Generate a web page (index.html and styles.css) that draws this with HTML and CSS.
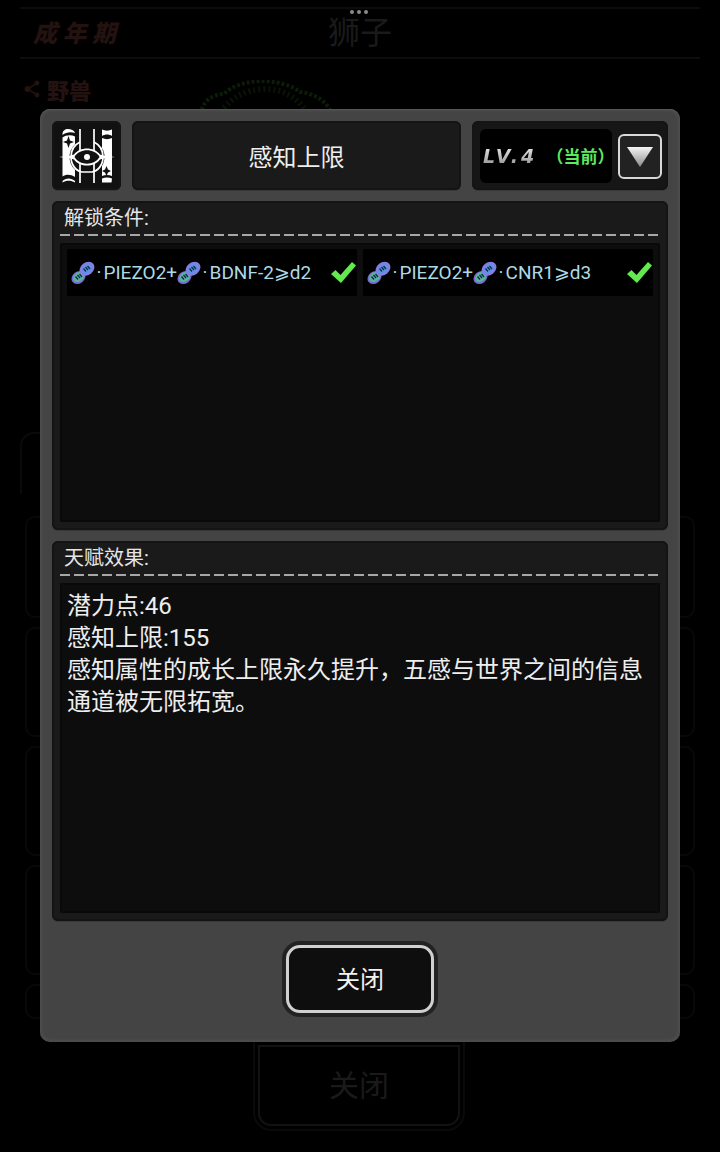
FILE: index.html
```html
<!DOCTYPE html>
<html lang="zh">
<head>
<meta charset="utf-8">
<title>感知上限</title>
<link rel="stylesheet" href="styles.css">
</head>
<body>
<svg class="defs" width="0" height="0" aria-hidden="true">
  <defs>
    <linearGradient id="tri-fill" x1="0" y1="0" x2="0" y2="1">
      <stop offset="0" stop-color="#f4f4f4"/>
      <stop offset="1" stop-color="#8a8a8a"/>
    </linearGradient>
    <symbol id="dna" viewBox="0 0 24 24">
      <ellipse cx="7.500" cy="16.500" rx="7.500" ry="6" transform="rotate(-38 7.500 16.500)" fill="#7a6ad6"/>
      <ellipse cx="7.800" cy="15.800" rx="6.300" ry="4.500" transform="rotate(-38 7.800 15.800)" fill="#58b39a"/>
      <ellipse cx="16" cy="7.800" rx="8" ry="6.300" transform="rotate(-38 16 7.800)" fill="#8f78ea"/>
      <ellipse cx="15.800" cy="8" rx="6.300" ry="4.500" transform="rotate(-38 15.800 8)" fill="#5f93e0"/>
      <g stroke="#14294d" stroke-width="1.300" fill="none">
        <path d="M12.500 7.500 15 10.500M14.500 6 17 9M16.500 5 19 8"/>
        <path d="M4.500 15.500 7 18.500M6.500 14 9 17M8.500 13 11 16"/>
      </g>
    </symbol>
    <symbol id="check" viewBox="0 0 25 21">
      <path d="M0 12 4.500 8 9.500 13 21 0 25 3.500 10 21Z" fill="#63ea4f"/>
    </symbol>
  </defs>
</svg>

<div class="page">
  <header class="top">
    <span class="dots"><i></i><i></i><i></i></span>
    <div class="top-row">
      <span class="stage">成年期</span>
      <span class="name">狮子</span>
    </div>
  </header>
  <div class="kind">
    <svg class="share" viewBox="0 0 18 18" aria-hidden="true"><path d="M13.500 3.500 4.500 9l9 5.500" fill="none" stroke="#24120e" stroke-width="1.500"/><circle cx="4.500" cy="9" r="3" fill="#24120e"/><circle cx="14" cy="3" r="2.400" fill="#24120e"/><circle cx="14" cy="15" r="2.400" fill="#24120e"/></svg>
    <span>野兽</span>
  </div>
  <svg class="portrait" viewBox="0 0 132 30" aria-hidden="true">
    <path d="M2 30C4 20 14 14 24 14 32 6 44 2 60 1c14 0 30 3 40 11 12 1 24 7 30 18" fill="none" stroke="#0c1c08" stroke-width="4" stroke-dasharray="3 2"/>
    <path d="M24 28C34 16 46 10 64 9c16 0 30 6 40 19" fill="none" stroke="#081405" stroke-width="6" stroke-dasharray="2 3"/>
  </svg>
  <div class="tab"></div>
  <div class="cards">
    <div class="card"></div>
    <div class="card"></div>
    <div class="card"></div>
    <div class="card"></div>
    <div class="card"></div>
  </div>
  <div class="back-close"><span>关闭</span></div>
</div>

<div class="dialog">
  <div class="head">
    <div class="panel icon-box">
      <svg class="talent" viewBox="0 0 56 56" aria-hidden="true">
        <g fill="#fff">
          <path d="M3.500 6C3.500 3 6 1 9 1s6 1 7 4c-4-1.500-9-1-12.500 2Z"/>
          <path d="M3.500 9.500C7 7 12 6.500 16 8.500V49c-4-2.500-9-3-12.500-.5Z"/>
          <path d="M3.500 54.500V53c3-3.500 9-3.500 12.500 0v1.500c-4-2.500-9-2.500-12.500 0Z"/>
          <path d="M43 1.500c3 1.500 7 1.500 10 0V8c-3-2-7-2-10 0Z"/>
          <path d="M43 10c3 1.500 7 1.500 10 0v38c-3-1.500-7-1.500-10 0Z"/>
          <path d="M43 50.500c3-1.500 7-1.500 10 0l-.5 4H43Z"/>
        </g>
        <circle cx="28" cy="29" r="17.500" fill="#111"/>
        <g fill="none" stroke="#fff" stroke-width="1.700">
          <path d="M21 1v54M35 1v54"/>
          <path d="M21 14C15 17 12 22 12 29c0 8 5 14 11 15h10c6-1 11-7 11-15 0-7-3-12-9-15"/>
        </g>
        <path d="M0 29 11 27.800 15 26.500C18 22.500 23 20.500 28 20.500s10 2 13 6L45 27.800 56 29 45 30.200 41 31.500C38 35.500 33 37.500 28 37.500s-10-2-13-6L11 30.200Z" fill="#fff"/>
        <path d="M15.500 29C18 24.500 23 22.300 28 22.300s10 2.200 12.500 6.700C38 33.500 33 35.700 28 35.700s-10-2.200-12.500-6.700Z" fill="#111"/>
        <circle cx="28" cy="29" r="3" fill="#fff"/>
        <path d="M9.500 8 11 12.500l4 1.500-4 1.500L9.500 20 8 15.500 4 14l4-1.500Z" fill="#111"/>
        <path d="M47.500 38 49 41.500 52 43 49 44.500 47.500 48 46 44.500 43 43 46 41.500Z" fill="#111"/>
      </svg>
    </div>
    <div class="panel title-box">感知上限</div>
    <div class="panel level-box">
      <div class="level-read">
        <span class="lv">LV.4</span>
        <span class="current">（当前）</span>
      </div>
      <button class="drop" type="button" aria-label="展开">
        <svg class="tri" viewBox="0 0 26 20" aria-hidden="true"><path d="M0 0H26L13 20Z" fill="url(#tri-fill)"/></svg>
      </button>
    </div>
  </div>

  <section class="panel section unlock">
    <h2 class="sec-title">解锁条件:</h2>
    <div class="well conds">
      <div class="cond">
        <span class="cond-text"><svg class="dna"><use href="#dna"/></svg><span class="dot">·</span>PIEZO2+<svg class="dna"><use href="#dna"/></svg><span class="dot">·</span>BDNF-2⩾d2</span>
        <svg class="check"><use href="#check"/></svg>
      </div>
      <div class="cond">
        <span class="cond-text"><svg class="dna"><use href="#dna"/></svg><span class="dot">·</span>PIEZO2+<svg class="dna"><use href="#dna"/></svg><span class="dot">·</span>CNR1⩾d3</span>
        <svg class="check"><use href="#check"/></svg>
      </div>
    </div>
  </section>

  <section class="panel section effect">
    <h2 class="sec-title">天赋效果:</h2>
    <div class="well desc">
      <p>潜力点:46</p>
      <p>感知上限:155</p>
      <p>感知属性的成长上限永久提升，五感与世界之间的信息通道被无限拓宽。</p>
    </div>
  </section>

  <div class="foot">
    <button class="close" type="button">关闭</button>
  </div>
</div>
</body>
</html>
```

FILE: styles.css
```css
* { box-sizing: border-box; }

html, body {
  margin: 0;
  height: 100%;
}

body {
  position: relative;
  width: 720px;
  height: 1152px;
  overflow: hidden;
  background: #000;
  font-family: Roboto, "Noto Sans CJK SC", sans-serif;
  color: #eee;
}

.defs { position: absolute; }

/* dimmed page behind the dialog */
.page {
  display: flex;
  flex-direction: column;
  height: 1152px;
  padding-top: 7px;
}

.top {
  position: relative;
  margin: 0 20px;
  height: 52px;
  border-top: 2px solid #0c0c0c;
  border-bottom: 2px solid #0c0c0c;
}

.dots {
  position: absolute;
  top: 1px;
  left: 330px;
  display: flex;
  gap: 3px;
}

.dots i {
  width: 4px;
  height: 4px;
  border-radius: 50%;
  background: #8a8a8a;
}

.top-row {
  position: relative;
  height: 48px;
}

.stage {
  position: absolute;
  left: 13px;
  top: 9px;
  font-size: 24px;
  line-height: 32px;
  font-weight: 900;
  font-style: italic;
  letter-spacing: 5.500px;
  color: #231210;
}

.name {
  display: block;
  text-align: center;
  font-size: 32px;
  line-height: 48px;
  color: #1a1a1a;
}

.kind {
  display: flex;
  align-items: center;
  gap: 6px;
  margin: 16px 0 0 23px;
  height: 28px;
  font-size: 22px;
  font-weight: 900;
  color: #231210;
}

.share { width: 18px; height: 18px; }

.portrait {
  position: absolute;
  left: 200px;
  top: 80px;
  width: 132px;
  height: 30px;
}

.tab {
  margin: 329px 0 0 20px;
  width: 120px;
  height: 62px;
  flex: none;
  border: 2px solid #0a0a0a;
  border-bottom: 0;
  border-radius: 14px 0 0 0;
}

.cards {
  display: flex;
  flex-direction: column;
  gap: 9px;
  margin: 22px 25px 0;
}

.card {
  height: 110px;
  flex: none;
  border: 2px solid #080808;
  border-radius: 10px;
}

.card:first-child { height: 102px; }
.card:last-child { height: 35px; }

.back-close {
  position: absolute;
  left: 253px;
  top: 1042px;
  width: 212px;
  height: 89px;
  padding: 0 0 6px;
  border: 2px solid #0a0a0a;
  border-top: 0;
  border-radius: 0 0 18px 18px;
  display: flex;
  align-items: center;
  justify-content: center;
  font-size: 30px;
  color: #1a1a1a;
  box-shadow: inset 0 0 0 3px #000, inset 0 0 0 5px #121212;
}

/* dialog */
.dialog {
  position: absolute;
  left: 40px;
  top: 109px;
  width: 640px;
  height: 933px;
  padding: 12px;
  display: flex;
  flex-direction: column;
  gap: 11px;
  background: #444;
  border-radius: 10px;
  box-shadow: inset 0 1px 0 #555, inset 0 0 5px #5a5a5a;
}

.panel {
  background: #1a1a1a;
  border-radius: 6px;
  box-shadow: inset 0 0 0 2px #141414, 0 1px 0 #383838;
}

.head {
  display: flex;
  gap: 11px;
  height: 69px;
  flex: none;
}

.icon-box {
  width: 69px;
  flex: none;
  display: flex;
  align-items: center;
  justify-content: center;
  background: #111;
}

.talent { width: 56px; height: 56px; }

.title-box {
  width: 329px;
  flex: none;
  display: flex;
  align-items: center;
  justify-content: center;
  font-size: 24px;
  color: #eee;
}

.level-box {
  width: 196px;
  flex: none;
  display: flex;
  align-items: center;
  gap: 6px;
  padding: 0 6px 0 8px;
  background: #161616;
}

.level-read {
  width: 132px;
  height: 54px;
  flex: none;
  display: flex;
  align-items: center;
  padding-left: 3px;
  background: #000;
  border-radius: 6px;
}

.lv {
  width: 72px;
  flex: none;
  font-family: "DejaVu Sans", sans-serif;
  font-size: 19px;
  font-weight: 700;
  font-style: italic;
  letter-spacing: 3.200px;
  background: linear-gradient(#eee, #8f8f8f);
  -webkit-background-clip: text;
  background-clip: text;
  color: transparent;
}

.current {
  font-size: 17px;
  font-weight: 700;
  font-feature-settings: "halt";
  color: #5fe85f;
  white-space: nowrap;
}

.drop {
  width: 44px;
  height: 45px;
  flex: none;
  margin-top: 2px;
  padding: 0;
  display: flex;
  align-items: center;
  justify-content: center;
  background: #222;
  border: 2px solid #d8d8d8;
  border-radius: 6px;
}

.tri { width: 26px; height: 20px; }

.section {
  display: flex;
  flex-direction: column;
  padding: 0 8px 8px;
}

.unlock { height: 329px; flex: none; }
.effect { height: 380px; flex: none; }

.sec-title {
  margin: 0;
  height: 35px;
  padding: 2px 4px 0;
  font-size: 20px;
  line-height: 30px;
  font-weight: 400;
  color: #e6e6e6;
  background: repeating-linear-gradient(90deg, #a8a8a8 0 10px, transparent 10px 14px) left bottom / 100% 2px no-repeat;
  flex: none;
}

.well {
  flex: 1;
  margin-top: 7px;
  background: #0d0d0d;
  border-radius: 2px;
  box-shadow: inset 0 0 0 2px #090909;
}

.conds {
  display: grid;
  grid-template-columns: 290px 290px;
  grid-auto-rows: 47px;
  gap: 6px;
  padding: 6px 7px;
}

.cond {
  display: flex;
  align-items: center;
  justify-content: space-between;
  padding: 0 1px 0 4px;
  background: #000;
}

.cond-text {
  display: flex;
  align-items: center;
  font-size: 19px;
  color: #add9e4;
  white-space: nowrap;
}

.dot { margin: 0 2px 0 1.500px; }

.dna { width: 24px; height: 24px; flex: none; }

.check { width: 25px; height: 21px; flex: none; }

.desc {
  padding: 7px 7px;
  font-size: 24px;
  line-height: 32px;
  color: #eee;
}

.desc p { margin: 0; }

.foot {
  display: flex;
  justify-content: center;
  padding-top: 13px;
}

.close {
  width: 148px;
  height: 68px;
  padding: 0 0 4px;
  background: #0e0e0e;
  border: 3px solid #d0d0d0;
  border-radius: 14px;
  box-shadow: 0 0 0 4px #222;
  font: inherit;
  font-size: 24px;
  color: #f2f2f2;
}
```
